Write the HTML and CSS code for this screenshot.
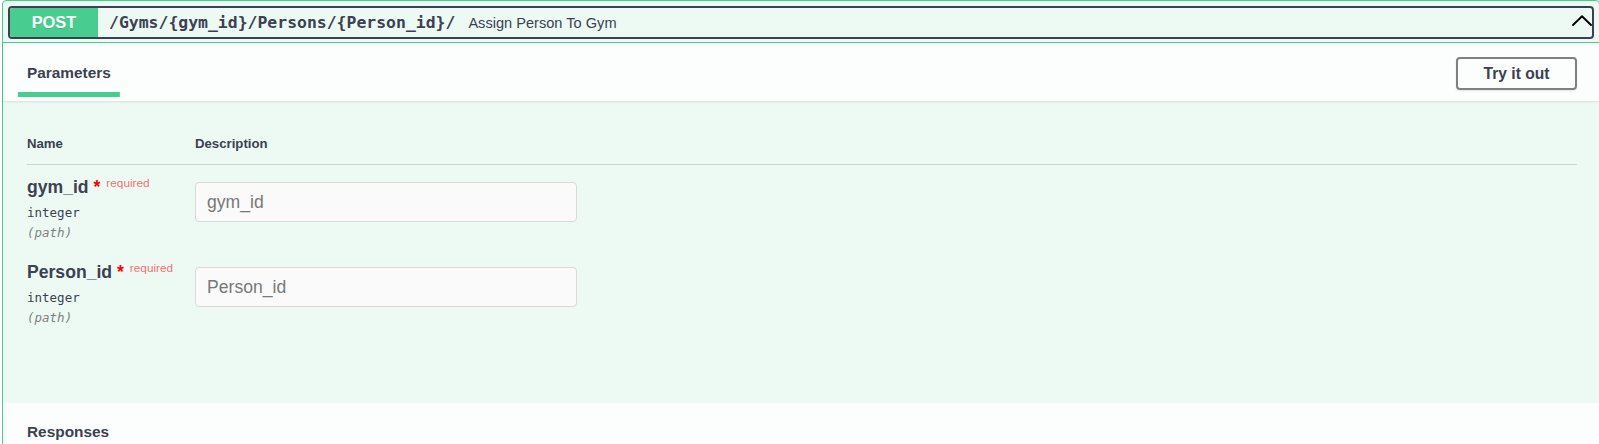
FILE: index.html
```html
<!DOCTYPE html>
<html>
<head>
<meta charset="utf-8">
<link rel="stylesheet" href="styles.css">
</head>
<body>
<div class="opblock">
  <div class="summary">
    <div class="control">
      <span class="method">POST</span>
      <span class="path">/Gyms/{gym_id}/Persons/{Person_id}/</span>
      <span class="desc">Assign Person To Gym</span>
      <svg class="arrow" width="20" height="11" viewBox="0 0 20 11"><polyline points="1,10 10,1.2 19,10" fill="none" stroke="#000" stroke-width="1.9" stroke-linecap="round" stroke-linejoin="round"/></svg>
    </div>
  </div>
  <div class="section-header">
    <h4 class="tab"><span>Parameters</span></h4>
    <button class="try">Try it out</button>
  </div>
  <div class="params">
    <div class="thead">
      <div class="col-name">Name</div>
      <div class="col-desc">Description</div>
    </div>
    <div class="prow">
      <div class="col-name">
        <div class="pname">gym_id<span class="star">&nbsp;*</span><sup class="req">required</sup></div>
        <div class="ptype">integer</div>
        <div class="pin">(path)</div>
      </div>
      <div class="col-desc"><input class="pinput" type="text" placeholder="gym_id"></div>
    </div>
    <div class="prow">
      <div class="col-name">
        <div class="pname">Person_id<span class="star">&nbsp;*</span><sup class="req">required</sup></div>
        <div class="ptype">integer</div>
        <div class="pin">(path)</div>
      </div>
      <div class="col-desc"><input class="pinput" type="text" placeholder="Person_id"></div>
    </div>
  </div>
  <div class="section-header resp">
    <h4 class="title">Responses</h4>
  </div>
</div>
</body>
</html>
```
FILE: styles.css
```css
html, body {
  margin: 0;
  padding: 0;
  background: #fff;
  overflow: hidden;
}
body {
  font-family: "Liberation Sans", Arial, sans-serif;
  color: #3b4151;
}
.opblock {
  box-sizing: border-box;
  width: 1598px;
  margin-left: 2px;
  border: 1px solid #49cc90;
  border-radius: 4px;
  background: #edfaf4;
  height: 520px;
}
.summary {
  padding: 5px 5px 3px 5px;
  border-bottom: 1px solid #49cc90;
}
.control {
  box-sizing: border-box;
  height: 33px;
  border: 2px solid #3b4151;
  border-radius: 4px;
  display: flex;
  align-items: center;
}
.method {
  width: 88px;
  height: 29px;
  flex: none;
  background: #49cc90;
  color: #fff;
  border-radius: 3px 0 0 3px;
  font-weight: 700;
  font-size: 16.4px;
  display: flex;
  align-items: center;
  justify-content: center;
  text-shadow: 0 1px 0 rgba(0,0,0,.1);
}
.path {
  font-family: "DejaVu Sans Mono", monospace;
  font-weight: 700;
  font-size: 16.45px;
  padding: 0 13px 0 11px;
  color: #3b4151;
}
.desc {
  font-size: 14.6px;
  color: #3b4151;
}
.arrow {
  margin-left: auto;
  margin-right: 0;
  margin-top: -4px;
  flex: none;
}
.section-header {
  height: 58px;
  box-sizing: border-box;
  padding: 0 22px 0 24px;
  display: flex;
  align-items: center;
  justify-content: space-between;
  background: rgba(255,255,255,.8);
  box-shadow: 0 1px 2px rgba(0,0,0,.1);
  position: relative;
}
.tab, .title {
  margin: 0;
  font-size: 15.4px;
  font-weight: 700;
  color: #3b4151;
}
.tab {
  margin-top: 1px;
}
.tab span {
  position: relative;
}
.tab span::after {
  content: "";
  position: absolute;
  left: 50%;
  bottom: -16px;
  width: 122%;
  height: 4.4px;
  transform: translateX(-50%);
  background: #49cc90;
}
.try {
  box-sizing: border-box;
  width: 121px;
  height: 33px;
  margin-top: 3px;
  border: 2px solid #808080;
  border-radius: 4px;
  background: transparent;
  font-family: "Liberation Sans", Arial, sans-serif;
  font-weight: 700;
  font-size: 15.6px;
  color: #3b4151;
  box-shadow: 0 1px 2px rgba(0,0,0,.1);
  padding: 0;
}
.params {
  height: 302px;
  box-sizing: border-box;
  padding: 22px 22px 0 24px;
}
.thead {
  display: flex;
  padding: 13px 0 13px;
  border-bottom: 1px solid rgba(59,65,81,.2);
  font-size: 13.2px;
  font-weight: 700;
  line-height: 15px;
}
.col-name {
  width: 168px;
  flex: none;
}
.col-desc {
  flex: 1;
}
.prow {
  display: flex;
  padding: 11px 0 10px;
}
.pname {
  font-size: 17.6px;
  font-weight: 700;
  line-height: 22px;
  white-space: nowrap;
}
.star {
  color: #f00;
  font-size: 17.6px;
}
.req {
  color: rgba(255,0,0,.6);
  font-size: 11.8px;
  font-weight: 400;
  padding-left: 6px;
  vertical-align: 0;
  position: relative;
  top: -6px;
}
.ptype {
  font-family: "DejaVu Sans Mono", monospace;
  font-size: 12.5px;
  line-height: 15px;
  padding: 5px 0;
  color: #3b4151;
}
.pin {
  font-family: "DejaVu Sans Mono", monospace;
  font-size: 12.5px;
  line-height: 15px;
  font-style: italic;
  color: #808080;
}
.pinput {
  box-sizing: border-box;
  display: block;
  width: 382px;
  height: 40px;
  margin-top: 6px;
  margin-left: 0;
  border: 1px solid #d9d9d9;
  border-radius: 4px;
  background: #fafafa;
  padding: 0 11px;
  font-family: "Liberation Sans", Arial, sans-serif;
  font-size: 17.6px;
  color: #3b4151;
  outline: none;
}
.pinput::placeholder {
  color: #787878;
}
.resp {
  box-shadow: none;
}
```
